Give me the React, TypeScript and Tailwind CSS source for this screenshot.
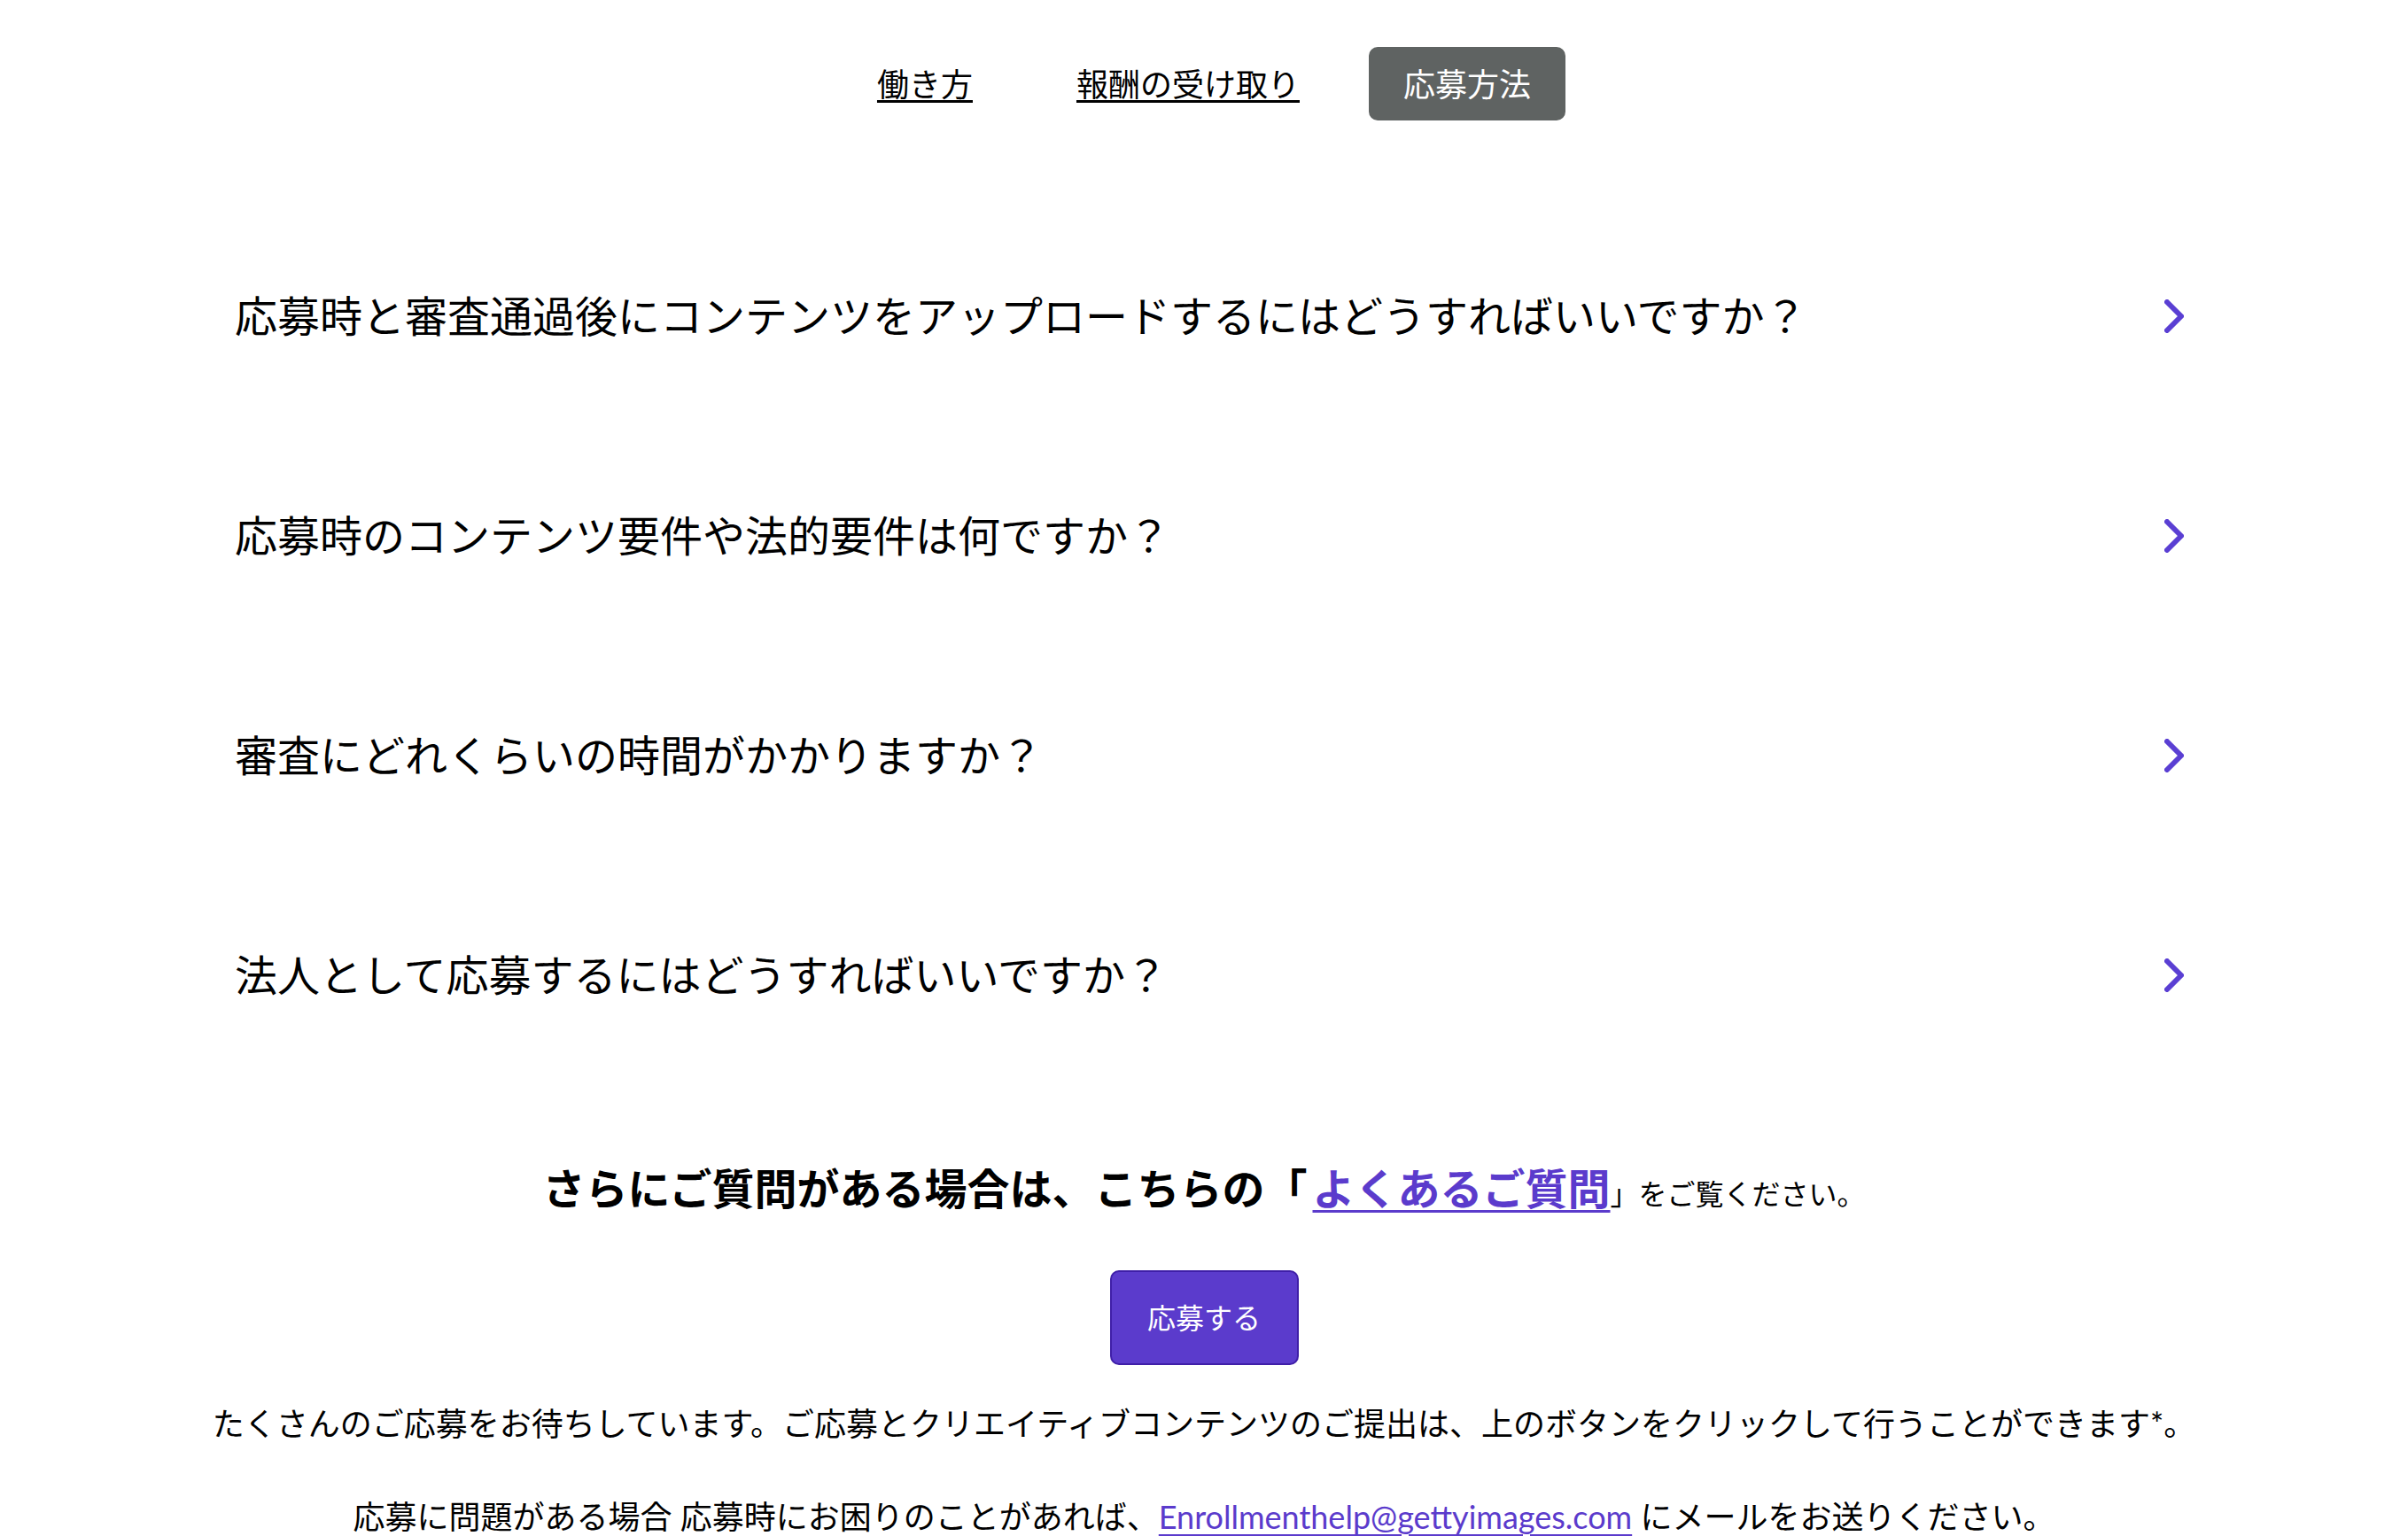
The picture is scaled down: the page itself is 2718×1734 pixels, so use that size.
const font = "font-['Lato','Noto_Sans_CJK_JP',sans-serif]";

const questions = [
  "応募時と審査通過後にコンテンツをアップロードするにはどうすればいいですか？",
  "応募時のコンテンツ要件や法的要件は何ですか？",
  "審査にどれくらいの時間がかかりますか？",
  "法人として応募するにはどうすればいいですか？",
];

function Chevron() {
  return (
    <svg width="22" height="38" viewBox="0 0 22 38" fill="none" className="shrink-0">
      <path
        d="M3 3 L19 19 L3 35"
        stroke="#5a3fd3"
        strokeWidth="6"
        strokeLinecap="round"
        strokeLinejoin="round"
      />
    </svg>
  );
}

function Tabs() {
  return (
    <nav className="flex justify-center gap-[39px] pt-[53px]">
      <a className="flex h-[83px] items-center px-[39px] text-[36px] text-black underline decoration-[3px] underline-offset-[4px]">
        働き方
      </a>
      <a className="flex h-[83px] items-center px-[39px] text-[36px] text-black underline decoration-[3px] underline-offset-[4px]">
        報酬の受け取り
      </a>
      <a className="flex h-[83px] items-center rounded-[10px] bg-[#5f6362] px-[39px] text-[36px] text-white">
        応募方法
      </a>
    </nav>
  );
}

export default function App() {
  return (
    <div className={`${font} min-h-screen bg-white text-black`}>
      <Tabs />

      {/* FAQ list */}
      <div className="mx-auto mt-[97px] w-[2240px]">
        {questions.map((q) => (
          <div key={q} className="flex h-[248px] items-center justify-between pl-[26px] pr-[14px]">
            <span className="text-[48px] leading-none">{q}</span>
            <Chevron />
          </div>
        ))}
      </div>

      <p className="mt-[87px] text-center leading-[60px]">
        <span className="text-[48px] font-bold">さらにご質問がある場合は、こちらの「</span>
        <a className="ml-[6px] text-[48px] font-bold text-[#5b3bcc] underline decoration-[3px] underline-offset-[6px]">
          よくあるご質問
        </a>
        <span className="text-[32px]">」をご覧ください。</span>
      </p>

      <div className="mt-[50px] flex justify-center">
        <button className="h-[107px] w-[213px] rounded-[10px] border-2 border-[#3f1fa8] bg-[#5b3bcc] text-[32px] text-white">
          応募する
        </button>
      </div>

      <p className="mt-[41px] text-center text-[36px] leading-[50px]">
        たくさんのご応募をお待ちしています。ご応募とクリエイティブコンテンツのご提出は、上のボタンをクリックして行うことができます*。
      </p>
      <p className="mt-[55px] text-center text-[36px] leading-[50px]">
        応募に問題がある場合 応募時にお困りのことがあれば、
        <a className="text-[#5b3bcc] underline decoration-2 underline-offset-[6px]">
          Enrollmenthelp@gettyimages.com
        </a>{" "}
        にメールをお送りください。
      </p>
    </div>
  );
}
